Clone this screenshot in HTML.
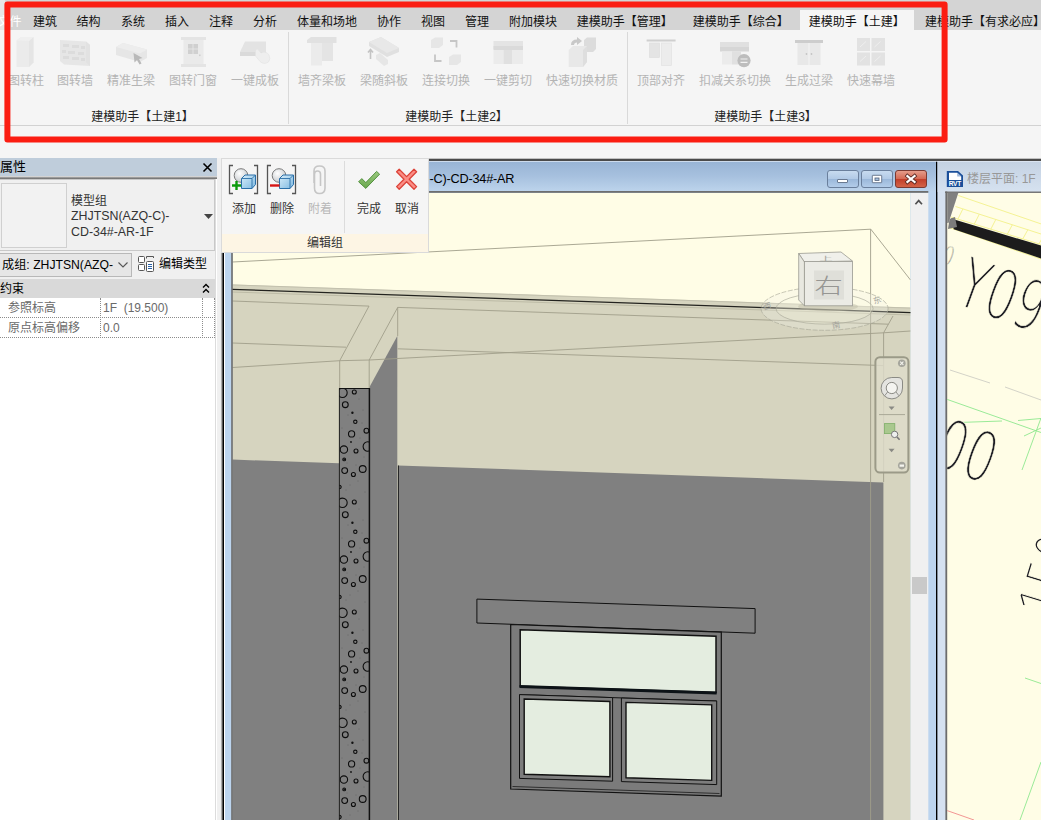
<!DOCTYPE html>
<html lang="zh-CN">
<head>
<meta charset="utf-8">
<title>Revit</title>
<style>
*{box-sizing:border-box;margin:0;padding:0}
html,body{width:1041px;height:820px;overflow:hidden;background:#f5f5f5}
body{position:relative;font-family:"Liberation Sans","Noto Sans CJK SC",sans-serif;font-size:12px;color:#1a1a1a}
.abs{position:absolute}
#tabbar{left:0;top:0;width:1041px;height:30px;background:#d4d4d4}
.tab{position:absolute;top:11.7px;height:20px;line-height:20px;font-size:12px;white-space:nowrap;transform:translateX(-50%);color:#111}
#acttab{left:800px;top:10px;width:114px;height:20px;background:#f5f5f5}
#ribbon{left:0;top:30px;width:1041px;height:128px;background:#f5f5f5}
.rb{position:absolute;top:73.5px;height:14px;line-height:14px;font-size:12px;white-space:nowrap;transform:translateX(-50%);color:#b4b4b4}
.pt{position:absolute;top:109.5px;height:14px;line-height:14px;font-size:12px;white-space:nowrap;transform:translateX(-50%);color:#222}
.vsep{position:absolute;top:32px;width:1px;height:92px;background:#d9d9d9}
#hline{left:0;top:125px;width:1041px;height:1px;background:#d2d2d2}
#redbox{left:5px;top:2px;width:942px;height:140px;border:5px solid #fb1d12;border-radius:9px}

#props{left:0;top:158px;width:217px;height:662px;background:#fff}
#phead{left:0;top:158px;width:217px;height:18px;background:#bfcddb;font-size:13px;line-height:18px;color:#000}
#phead2{left:0;top:176px;width:217px;height:3px;background:linear-gradient(#f0f0f0,#8a8a8a 60%,#6e6e6e)}
#ptype{left:0;top:179px;width:215px;height:72px;background:#f0f0f0;border:1px solid #c8c8c8;border-left:none}
#pprev{left:1px;top:183px;width:66px;height:65px;background:#f2f2f2;border:1px solid #d0d0d0}
.ptx{position:absolute;left:71px;font-size:12px;line-height:16px;color:#333;white-space:nowrap}
#pcombo{left:0;top:253px;width:132px;height:24px;background:#e6e6e6;border:1px solid #b8b8b8;border-left:none;font-size:12.2px;line-height:23px;padding-left:2px;color:#000;white-space:nowrap}
#pbar{left:0;top:251px;width:215px;height:28px;background:#f0f0f0}
#pedit{left:159px;top:256px;font-size:12px;line-height:16px;color:#000;white-space:nowrap}
#psec{left:0;top:279px;width:215px;height:19px;background:#d9d9d9;font-size:12px;line-height:20px;color:#000}
.prow{position:absolute;font-size:12px;line-height:19px;height:19px;color:#6a6a6a;white-space:nowrap}
.hd{position:absolute;left:0;width:215px;height:0;border-top:1px dotted #8c8c8c}
.vd{position:absolute;top:298px;height:40px;width:0;border-left:1px dotted #8c8c8c}
#pright{left:215px;top:179px;width:1px;height:641px;background:#dcdcdc}
#pgap{left:217px;top:158px;width:5px;height:662px;background:#f0f0f0}

#scene{left:220px;top:158px}

#eg{left:221px;top:157.5px;width:208px;height:95.5px;background:#f5f5f5;border:1px solid #dadada}
#egl{left:222px;top:234px;width:206px;height:18px;background:#fdf5e4;font-size:12px;line-height:19px;text-align:center;color:#333}
.el{position:absolute;top:200.6px;height:16px;line-height:16px;font-size:12px;white-space:nowrap;transform:translateX(-50%);color:#333}
#egsep{left:344px;top:161px;width:1px;height:72px;background:#dcdcdc}
#wtitle{left:429.5px;top:171px;font-size:12.7px;line-height:17px;color:#000;white-space:nowrap;letter-spacing:-0.2px}
#w2title{left:967px;top:171px;font-size:12px;line-height:17px;color:#989898;white-space:nowrap}
</style>
</head>
<body>
<div id="tabbar" class="abs"></div>
<div class="abs" style="left:0;top:0;width:5px;height:30px;background:#e6e6e6"></div>
<div id="acttab" class="abs"></div>
<div id="ribbon" class="abs"></div>
<div class="tab" style="left:-2.5px;color:#fff;transform:none">文件</div>
<div class="tab" style="left:45px">建筑</div>
<div class="tab" style="left:88.5px">结构</div>
<div class="tab" style="left:133px">系统</div>
<div class="tab" style="left:177px">插入</div>
<div class="tab" style="left:221px">注释</div>
<div class="tab" style="left:265px">分析</div>
<div class="tab" style="left:327px">体量和场地</div>
<div class="tab" style="left:389px">协作</div>
<div class="tab" style="left:433px">视图</div>
<div class="tab" style="left:477px">管理</div>
<div class="tab" style="left:533px">附加模块</div>
<div class="tab" style="left:624.8px">建模助手【管理】</div>
<div class="tab" style="left:740.8px">建模助手【综合】</div>
<div class="tab" style="left:856.8px">建模助手【土建】</div>
<div class="tab" style="left:925px;transform:none">建模助手【有求必应】</div>
<!--TABS-->
<div class="rb" style="left:26px">图转柱</div>
<div class="rb" style="left:75px">图转墙</div>
<div class="rb" style="left:131px">精准生梁</div>
<div class="rb" style="left:193px">图转门窗</div>
<div class="rb" style="left:255px">一键成板</div>
<div class="rb" style="left:322px">墙齐梁板</div>
<div class="rb" style="left:384px">梁随斜板</div>
<div class="rb" style="left:446px">连接切换</div>
<div class="rb" style="left:508px">一键剪切</div>
<div class="rb" style="left:582px">快速切换材质</div>
<div class="rb" style="left:661px">顶部对齐</div>
<div class="rb" style="left:735px">扣减关系切换</div>
<div class="rb" style="left:809px">生成过梁</div>
<div class="rb" style="left:871px">快速幕墙</div>
<div class="pt" style="left:142.5px">建模助手【土建1】</div>
<div class="pt" style="left:456.5px">建模助手【土建2】</div>
<div class="pt" style="left:765.5px">建模助手【土建3】</div>
<div class="vsep" style="left:288px"></div>
<div class="vsep" style="left:627px"></div>
<svg class="abs" style="left:0;top:30px" width="941" height="44" viewBox="0 30 941 44">
<g stroke="none">
<!-- column -->
<path d="M16.5 40.5 L21 37 H33.5 V62.5 L29 67 H16.5 Z" fill="#ebebeb"/>
<path d="M29 41 L33.5 37 V62.5 L29 67 Z" fill="#e5e5e5"/>
<path d="M16.5 40.5 L21 37 H33.5 L29 41 Z" fill="#efefef"/>
<!-- wall -->
<path d="M60 40 L86 41.5 L90 45 V66 L64 64.5 L60 61 Z" fill="#e6e6e6"/>
<path d="M86 41.5 L90 45 V66 L86 62.5 Z" fill="#e2e2e2"/>
<g fill="#dcdcdc"><rect x="63" y="44" width="6" height="3"/><rect x="72" y="45" width="7" height="3"/><rect x="81" y="46" width="4" height="3"/><rect x="62" y="50" width="4" height="3"/><rect x="68" y="51" width="7" height="3"/><rect x="78" y="52" width="6" height="3"/><rect x="63" y="56" width="6" height="3"/><rect x="72" y="57" width="7" height="3"/><rect x="81" y="58" width="4" height="3"/></g>
<!-- beam -->
<path d="M116 47 L123 43 L147 49.5 V58 L140 62 L116 55 Z" fill="#e6e6e6"/>
<path d="M116 47 L123 43 L147 49.5 L140 53.5 Z" fill="#ededed"/>
<path d="M133.5 53 L142.5 58 L139 59 L141.5 63.5 L139.5 64.5 L137 60 L134.5 62.5 Z" fill="#b9b9b9"/>
<!-- door -->
<rect x="181" y="37" width="25" height="3" fill="#e4e4e4"/>
<rect x="181" y="64" width="25" height="3" fill="#e4e4e4"/>
<rect x="183.5" y="40" width="20" height="24" fill="#eaeaea"/>
<g fill="#d0d0d0"><rect x="188" y="44" width="4.6" height="4.6"/><rect x="193.4" y="44" width="4.6" height="4.6"/><rect x="188" y="49.4" width="4.6" height="4.6"/><rect x="193.4" y="49.4" width="4.6" height="4.6"/><rect x="199" y="54.5" width="1.6" height="1.6"/></g>
<!-- slab -->
<path d="M245 41.500 H266 V56 H240 V52 Z" fill="#e3e3e3"/>
<path d="M240 52 H266 V56 H240 Z" fill="#dadada"/>
<path d="M255.500 50 Q257.500 48.500 259 50.500 L261 53 Q266 50.500 269 55 Q271 59 268.500 62 Q264 65 260 61.500 L255.500 56 Z" fill="#eeeeee" stroke="#e2e2e2" stroke-width="0.6"/>
<!-- wall-beam-slab -->
<path d="M307 40 L311 37 H336.5 V43 H307 Z" fill="#e1e1e1"/>
<rect x="311" y="43" width="11" height="22.5" fill="#ebebeb"/>
<rect x="322" y="43" width="11" height="18" fill="#e4e4e4"/>
<!-- beam follow slab -->
<path d="M369 42 L381 37 L399 48 V52 L387 57 L369 46 Z" fill="#e0e0e0"/>
<path d="M369 42 L381 37 L399 48 L387 53 Z" fill="#e8e8e8"/>
<path d="M376 55 L380 53 L388 60 V64 L384 66 L376 59 Z" fill="#e6e6e6"/>
<path d="M370.5 59 V50 M368 52.5 L370.5 49.5 L373 52.5" fill="none" stroke="#c4c4c4" stroke-width="1.6"/>
<!-- connect switch -->
<path d="M431 40 L435 37.5 H443 V45 L439 48 H431 Z" fill="#e6e6e6"/>
<path d="M449 57 L453 54.5 H461 V62 L457 65 H449 Z" fill="#e6e6e6"/>
<path d="M450 41 H456.5 V47.5 M441.5 61 H435 V54.5" fill="none" stroke="#c6c6c6" stroke-width="1.8"/>
<!-- one-key cut -->
<rect x="493.500" y="41" width="29.5" height="8" fill="#e4e4e4"/>
<rect x="493.500" y="46" width="29.5" height="4" fill="#dadada"/>
<rect x="493.500" y="50" width="10" height="14" fill="#ebebeb"/>
<rect x="503.500" y="50" width="9" height="14" fill="#e0e0e0"/>
<rect x="512.500" y="50" width="10.5" height="14" fill="#ebebeb"/>
<!-- material switch -->
<path d="M568.700 50 L573 46 H587 V62 L583 67 H568.700 Z" fill="#e8e8e8"/>
<path d="M583 50 L587 46 V62 L583 67 Z" fill="#dedede"/>
<path d="M584 40 L587 37.500 H596 V49 L593 52 H587 V46 H584 Z" fill="#dcdcdc"/>
<path d="M571 45 Q571 39.500 577 39.500 V37 L582 41 L577 45 V42.500 Q574 42.500 574 45 Z" fill="#c8c8c8"/>
<!-- top align -->
<rect x="646.600" y="39.500" width="29" height="2" fill="#cfcfcf"/>
<rect x="649.500" y="43" width="10" height="14.5" fill="#e4e4e4" stroke="#dcdcdc" stroke-width="0.6"/>
<rect x="661.500" y="43" width="10" height="22.500" fill="#ececec" stroke="#e0e0e0" stroke-width="0.6"/>
<!-- deduct switch -->
<rect x="720" y="42" width="29" height="7" fill="#e0e0e0"/>
<rect x="720" y="47" width="29" height="4.500" fill="#d6d6d6"/>
<rect x="722" y="51.500" width="10" height="13" fill="#ebebeb"/>
<rect x="732" y="51.500" width="9" height="13" fill="#e0e0e0"/>
<circle cx="744" cy="60.600" r="6.600" fill="#bdbdbd"/>
<path d="M740.500 59 H747.500 M740.500 62.300 H747.500" stroke="#f2f2f2" stroke-width="1.200" fill="none"/>
<!-- lintel -->
<rect x="795" y="40" width="28" height="3" fill="#cdcdcd"/>
<rect x="797.500" y="43" width="23" height="22" fill="#e8e8e8"/>
<path d="M809 43 V65" stroke="#f4f4f4" stroke-width="1" fill="none"/>
<circle cx="806.500" cy="54" r="0.900" fill="#c4c4c4"/><circle cx="811.500" cy="54" r="0.900" fill="#c4c4c4"/>
<!-- curtain wall -->
<g fill="#e2e2e2"><rect x="857" y="38" width="13" height="13"/><rect x="871.500" y="38" width="13.500" height="13"/><rect x="857" y="52.500" width="13" height="13"/><rect x="871.500" y="52.500" width="13.500" height="13"/></g>
<g stroke="#efefef" stroke-width="1" fill="none"><path d="M860 47 L866 41.500 M874.500 47 L880.500 41.500 M860 61.500 L866 56 M874.500 61.500 L880.500 56"/></g>
</g>
</svg>
<!--RIBBON-->
<div id="hline" class="abs"></div>
<div id="props" class="abs"></div>
<div id="phead" class="abs">属性</div>
<svg class="abs" style="left:202px;top:162px" width="11" height="11" viewBox="0 0 11 11"><path d="M1.5 1.5 L9.5 9.5 M9.5 1.5 L1.5 9.5" stroke="#000" stroke-width="1.6" fill="none"/></svg>
<div id="phead2" class="abs"></div>
<div id="ptype" class="abs"></div>
<div id="pprev" class="abs"></div>
<div class="ptx" style="top:192.5px">模型组</div>
<div class="ptx" style="top:208px;font-size:12.4px">ZHJTSN(AZQ-C)-</div>
<div class="ptx" style="top:223.5px;font-size:12.4px">CD-34#-AR-1F</div>
<svg class="abs" style="left:204px;top:214px" width="9" height="5" viewBox="0 0 9 5"><path d="M0 0 H9 L4.5 5 Z" fill="#444"/></svg>
<div id="pbar" class="abs"></div>
<div id="pcombo" class="abs">成组: ZHJTSN(AZQ-</div>
<svg class="abs" style="left:118px;top:262px" width="10" height="6" viewBox="0 0 10 6"><path d="M0.5 0.5 L5 5 L9.5 0.5" stroke="#555" stroke-width="1.1" fill="none"/></svg>
<svg class="abs" style="left:137px;top:255px" width="18" height="18" viewBox="0 0 18 18"><g fill="#fff" stroke="#555" stroke-width="1"><rect x="1.5" y="1.5" width="6" height="6" rx="1"/><rect x="1.5" y="9.5" width="6" height="6" rx="1"/><path d="M9.5 1.5 H14.5 M9.5 3.5 V1.5 M16.5 3 V1.5 H14" fill="none"/><rect x="9.5" y="6.5" width="7" height="10" rx="1"/></g><path d="M11 9.5 H15 M11 11.5 H15 M11 13.5 H15" stroke="#2a62a8" stroke-width="1"/></svg>
<div id="pedit" class="abs">编辑类型</div>
<div id="psec" class="abs">约束</div>
<svg class="abs" style="left:202px;top:283px" width="8" height="11" viewBox="0 0 8 11"><path d="M1 4.5 L4 1.5 L7 4.5 M1 9.5 L4 6.5 L7 9.5" stroke="#000" stroke-width="1.4" fill="none"/></svg>
<div class="prow" style="left:8px;top:299px">参照标高</div>
<div class="prow" style="left:103px;top:299px">1F&nbsp; (19.500)</div>
<div class="prow" style="left:8px;top:319px">原点标高偏移</div>
<div class="prow" style="left:103px;top:319px">0.0</div>
<div class="hd" style="top:317px"></div>
<div class="hd" style="top:337px"></div>
<div class="vd" style="left:100px"></div>
<div class="vd" style="left:202px"></div>
<div class="vd" style="left:214px"></div>
<div id="pright" class="abs"></div>
<div id="pgap" class="abs"></div>
<!--PROPS-->
<svg id="scene" class="abs" width="821" height="662" viewBox="220 158 821 662">
<defs>
<linearGradient id="tg" x1="0" y1="0" x2="0" y2="1"><stop offset="0" stop-color="#97b3d4"/><stop offset="0.5" stop-color="#a6c0de"/><stop offset="1" stop-color="#bdd4ec"/></linearGradient>
<linearGradient id="lg" x1="0" y1="0" x2="1" y2="0"><stop offset="0" stop-color="#d8d8d8"/><stop offset="1" stop-color="#4a4a4a"/></linearGradient>
<linearGradient id="tg2" x1="0" y1="0" x2="0" y2="1"><stop offset="0" stop-color="#c3d1e2"/><stop offset="1" stop-color="#d6e2f0"/></linearGradient>
<pattern id="conc" x="339" y="385" width="31" height="110" patternUnits="userSpaceOnUse">
<rect width="31" height="110" fill="#808080"/>
<g fill="none" stroke="#0c0c0c" stroke-width="1.1"><circle cx="3.5" cy="7.8" r="4.7"/><circle cx="15.3" cy="7" r="2"/><circle cx="6.3" cy="19.7" r="2.9"/><circle cx="16.3" cy="36.8" r="1.7"/><circle cx="27.4" cy="45.7" r="2.4"/><circle cx="12.6" cy="48.9" r="3.1"/><circle cx="28.8" cy="61.5" r="4.7"/><circle cx="4.9" cy="64.6" r="3.7"/><circle cx="17" cy="66" r="2"/><circle cx="5.2" cy="74.4" r="1.4"/><circle cx="23.7" cy="84" r="3.4"/><circle cx="5.7" cy="85.6" r="2.9"/><circle cx="14.4" cy="89.5" r="2"/><circle cx="0.6" cy="102" r="1.6"/></g>
<g fill="#111"><circle cx="13.4" cy="27.8" r="1.2"/><circle cx="12" cy="57" r="0.9"/><circle cx="5.2" cy="74.4" r="0.8"/></g>
<g fill="#4a4a4a"><circle cx="20" cy="14" r="0.45"/><circle cx="9" cy="30" r="0.45"/><circle cx="24" cy="25" r="0.45"/><circle cx="21" cy="53" r="0.45"/><circle cx="8" cy="78" r="0.45"/><circle cx="25" cy="72" r="0.45"/><circle cx="19" cy="96" r="0.45"/><circle cx="7" cy="105" r="0.45"/><circle cx="26" cy="107" r="0.45"/><circle cx="23" cy="38" r="0.45"/><circle cx="11" cy="100" r="0.45"/><circle cx="17" cy="80" r="0.45"/><circle cx="3" cy="43" r="0.45"/></g>
</pattern>
<filter id="thin" x="940" y="190" width="110" height="640" filterUnits="userSpaceOnUse"><feMorphology operator="erode" radius="0.55"/></filter>
<clipPath id="vc2"><rect x="947.2" y="193" width="94" height="627"/></clipPath>
<clipPath id="vc"><rect x="232" y="193" width="678.7" height="627"/></clipPath>
</defs>
<!-- window frames -->
<rect x="222" y="158" width="819" height="662" fill="#f5f5f5"/>
<rect x="222" y="160" width="716" height="660" fill="#bcd4ee"/>
<rect x="222" y="160" width="716" height="31.5" fill="url(#tg)"/>
<rect x="220.8" y="252" width="2.2" height="568" fill="url(#lg)"/><rect x="222.8" y="160" width="1.2" height="660" fill="#000"/>
<rect x="224" y="192" width="1" height="628" fill="#fff"/>
<rect x="231.3" y="191" width="697" height="1.8" fill="#6e6e6e"/>

<rect x="936" y="160" width="1.6" height="660" fill="#000"/>
<!-- window 2 -->
<rect x="937.6" y="160" width="104" height="660" fill="#d5e1f0"/>
<rect x="937.6" y="160" width="104" height="32" fill="url(#tg2)"/>
<rect x="945" y="191.5" width="96" height="1.5" fill="#777"/>
<rect x="222" y="158.7" width="819" height="2.3" fill="#4a4a4a"/>
<rect x="224" y="161" width="817" height="0.7" fill="#e4edf7"/>

<rect x="946" y="193" width="95" height="627" fill="#fffde6"/>
<rect x="945.4" y="191.5" width="1.8" height="629" fill="#6c6c6c"/>
<!-- scrollbar -->
<rect x="910.7" y="193" width="17.6" height="627" fill="#f0f0f0"/>
<rect x="912" y="577" width="15" height="17" fill="#c9c9c9"/>
<path d="M915.4 204.2 L918.7 200.6 L922 204.2" fill="none" stroke="#505050" stroke-width="1.7"/>
<!-- 3D view -->
<g clip-path="url(#vc)">
<rect x="232.5" y="193" width="678" height="627" fill="#fffde6"/>
<!-- slab/beige -->
<polygon points="232.5,284.4 910.5,307.6 910.5,820 232.5,820" fill="#d6d4bf"/>
<path d="M232.5 284.9 L910.5 308.1" stroke="#c2c0ad" stroke-width="1" fill="none"/>
<!-- grey wall -->
<polygon points="232.5,459.6 339,463.2 339,820 232.5,820" fill="#808080"/>
<polygon points="398,465.4 883.4,482.5 883.4,820 398,820" fill="#808080"/>
<polygon points="369.5,387 397.3,336 397.3,820 369.5,820" fill="#808080"/>
<rect x="339.3" y="388.3" width="30.2" height="432" fill="url(#conc)"/>
<g fill="none" stroke="#111" stroke-width="1">
<path d="M339.4 388.3 V820" stroke-width="0.9"/>
<path d="M369.4 388.3 V820" stroke-width="1.5"/>
<path d="M339 388.5 H370" stroke-width="1"/>
<path d="M398.4 465.5 V820" stroke-width="0.9"/>
</g>
<!-- dark horizon line -->
<path d="M232 289.4 L910.7 312.6" stroke="#23231f" stroke-width="1.3" fill="none"/>
<path d="M232.5 292 L910.5 315" stroke="#bdbba6" stroke-width="1" fill="none"/>
<!-- wireframe -->
<g fill="none" stroke="#a09e8a" stroke-width="0.9">
<path d="M232.5 262 L870.8 229.2 L910.5 280"/>
<path d="M870.6 229.2 V820"/>
<path d="M232.5 301 L369 306.1 L339.7 360.7 V388"/>
<path d="M397.7 307.4 L888.3 324.2"/>
<path d="M397.7 307.4 L369.2 360 V388"/>
<path d="M397.7 307.4 V336"/>
<path d="M232.5 343 L346 347.2"/>
<path d="M397.7 348.8 L883.5 365.6"/>
<path d="M232.5 367.5 L339.7 360.7 L369.2 360 L883.5 332.8 L910.5 331"/>
<path d="M883.6 332.8 V482"/>
<path d="M883.6 332.8 L893 316"/>
</g>
<!-- lintel -->
<polygon points="476.9,599.1 755.1,608.6 755.1,633.2 476.9,623" fill="#808080" stroke="#111" stroke-width="1"/>
<!-- window -->
<polygon points="510.7,624.5 721.3,632.2 721.3,796.1 510.7,789" fill="#7b7b7b" stroke="#111" stroke-width="1.2"/>
<path d="M512.5 786.5 L719.5 793.5" stroke="#1a1a1a" stroke-width="0.8" fill="none"/>
<polygon points="520.2,629.8 716,636.2 716,692.6 520.2,686.2" fill="#e4ede0" stroke="#111" stroke-width="1.5"/>
<path d="M519.5 686.6 L716.7 693" stroke="#0c1216" stroke-width="3" fill="none"/>
<path d="M519.5 694.6 L716.7 701" stroke="#111" stroke-width="1" fill="none"/>
<polygon points="519.5,694.6 612.6,697.6 612.6,781.2 519.5,778.4" fill="#7d7d7d" stroke="#111" stroke-width="1"/>
<polygon points="621.4,698 716.7,701 716.7,784.6 621.4,781.6" fill="#7d7d7d" stroke="#111" stroke-width="1"/>
<polygon points="524.2,699 609.9,701.5 609.9,776.8 524.2,774.3" fill="#e4ede0" stroke="#111" stroke-width="1.4"/>
<polygon points="626,702.4 711.7,704.9 711.7,780.4 626,777.7" fill="#e4ede0" stroke="#111" stroke-width="1.4"/>
<!-- viewcube -->
<g>
<ellipse cx="824.6" cy="308.7" rx="63.5" ry="21.6" fill="#f2f1e6" fill-opacity="0.28" stroke="#a9a898" stroke-width="0.8" stroke-dasharray="5 1.5" stroke-opacity="0.8"/>
<ellipse cx="824.6" cy="308.7" rx="48.5" ry="15.4" fill="#fffde6" fill-opacity="0.18" stroke="#a9a898" stroke-width="0.8" stroke-opacity="0.8"/>
<ellipse cx="828" cy="306.5" rx="30" ry="5" fill="#b9b7a2" fill-opacity="0.4"/>
<polygon points="798.7,253.5 841,252 852.5,261 804.4,262" fill="#f0f0ea" stroke="#9a9a92" stroke-width="0.8"/>
<polygon points="798.7,253.5 804.4,262 804.4,305.8 798.7,300" fill="#e8e8e0" stroke="#9a9a92" stroke-width="0.8"/>
<rect x="804.4" y="261.5" width="48.1" height="44.3" fill="#ebebe5" stroke="#9a9a92" stroke-width="0.8"/>
<rect x="814" y="270.5" width="30" height="29" fill="#dfdfd9"/>
<text transform="translate(828.6 292.5) scale(1.36 1)" font-family="'Liberation Sans','Noto Sans CJK SC',sans-serif" font-size="21" font-weight="300" fill="#969693" text-anchor="middle">右</text>
<text transform="translate(826 259.6) scale(1.7 0.55)" font-family="'Liberation Sans','Noto Sans CJK SC',sans-serif" font-size="8" fill="#a6a69e" text-anchor="middle">上</text>
<text x="767" y="309" font-family="'Liberation Sans','Noto Sans CJK SC',sans-serif" font-size="8" fill="#a3a39b" text-anchor="middle" transform="rotate(-15 767 306)">西</text>
<text x="877" y="303" font-family="'Liberation Sans','Noto Sans CJK SC',sans-serif" font-size="8" fill="#a3a39b" text-anchor="middle" transform="rotate(-20 877 300)">东</text>
<text x="836" y="328" font-family="'Liberation Sans','Noto Sans CJK SC',sans-serif" font-size="8" fill="#a3a39b" text-anchor="middle" transform="rotate(-12 836 325)">南</text>
</g>
<!-- navbar -->
<g>
<rect x="875.4" y="357.2" width="33" height="115.4" rx="4.5" fill="#dedccb" fill-opacity="0.8" stroke="#9b9a88" stroke-width="2"/>
<circle cx="901.8" cy="363.2" r="3.8" fill="#a5a59c"/>
<path d="M900.2 361.6 L903.4 364.8 M903.4 361.6 L900.2 364.8" stroke="#f4f4ee" stroke-width="1.1"/>
<path d="M891.8 377.5 H898 Q902.5 377.5 902.5 382 V388 A10.7 10.7 0 1 1 891.8 377.5 Z" fill="#e4e4e0" stroke="#8a8a84" stroke-width="1"/>
<circle cx="891.8" cy="388" r="5.6" fill="#f4f4f0" stroke="#8a8a84" stroke-width="1"/>
<path d="M887.6 392 L884.6 395.8 M896 392 L899 395.8" stroke="#8a8a84" stroke-width="0.9"/>
<path d="M888.6 406.6 H894.6 L891.6 410 Z" fill="#8a8a84"/>
<path d="M879 414.6 H905" stroke="#a9a897" stroke-width="1"/>
<rect x="884.4" y="423.6" width="10.4" height="10" fill="#a9c88e" stroke="#7fae68" stroke-width="0.8"/>
<circle cx="894.6" cy="434.4" r="3.2" fill="#eef0ee" stroke="#777" stroke-width="1"/>
<path d="M897 437 L899.6 439.8" stroke="#777" stroke-width="1.6"/>
<path d="M888.6 448.8 H894.6 L891.6 452.2 Z" fill="#8a8a84"/>
<circle cx="901.8" cy="465.6" r="3.8" fill="#a5a59c"/>
<path d="M899.6 464.6 H904 V466.8 H899.6 Z" fill="#f4f4ee"/>
</g>
</g>
<!-- window buttons -->
<defs>
<linearGradient id="bb" x1="0" y1="0" x2="0" y2="1"><stop offset="0" stop-color="#c9dcf0"/><stop offset="0.48" stop-color="#b2cae6"/><stop offset="0.52" stop-color="#9bb8da"/><stop offset="1" stop-color="#b4cdea"/></linearGradient>
<linearGradient id="br" x1="0" y1="0" x2="0" y2="1"><stop offset="0" stop-color="#e6a08e"/><stop offset="0.48" stop-color="#d46a55"/><stop offset="0.52" stop-color="#c23f2a"/><stop offset="1" stop-color="#d4664a"/></linearGradient>
</defs>
<g>
<rect x="827.5" y="170.5" width="31" height="17" rx="2.5" fill="url(#bb)" stroke="#6a7f9c" stroke-width="1"/>
<rect x="861.5" y="170.5" width="31" height="17" rx="2.5" fill="url(#bb)" stroke="#6a7f9c" stroke-width="1"/>
<rect x="895.5" y="170.5" width="31" height="17" rx="2.5" fill="url(#br)" stroke="#7a3a32" stroke-width="1"/>
<rect x="837.5" y="179.5" width="10" height="3" rx="0.5" fill="#fff" stroke="#4f5f78" stroke-width="0.8"/>
<rect x="872.3" y="175.3" width="9.4" height="7.4" rx="0.5" fill="#fff" stroke="#4f5f78" stroke-width="0.8"/>
<rect x="875" y="178" width="4" height="2.4" fill="#a6c0de" stroke="#4f5f78" stroke-width="0.8"/>
<path d="M907.4 176 L914.6 182 M914.6 176 L907.4 182" stroke="#5a2a24" stroke-width="3.8" stroke-linecap="square"/>
<path d="M907.4 176 L914.6 182 M914.6 176 L907.4 182" stroke="#fff" stroke-width="2.2" stroke-linecap="square"/>
</g>
<!-- RVT icon -->
<g>
<path d="M946.8 171 H958 L963 175.5 V187 H946.8 Z" fill="#1b4f9a"/>
<path d="M949 172.8 H957.2 L961.2 176.6 V180 H949 Z" fill="#fff"/>
<path d="M957.2 172.8 V176.6 H961.2 Z" fill="#9fb8dc"/>
<text x="954.9" y="186.2" font-family="'Liberation Sans',sans-serif" font-size="6.6" font-weight="bold" fill="#fff" text-anchor="middle" letter-spacing="-0.2">RVT</text>
</g>
<!-- second window content -->
<g clip-path="url(#vc2)">
<polygon points="946,193 958.3,193 948.5,223 946,223" fill="#808080"/>
<g stroke="#f3f08a" stroke-width="0.9" fill="none">
<path d="M958.3 195.5 L1041 223.9"/><path d="M955.5 206.5 L1041 234"/><path d="M951 217 L1041 244.5"/><path d="M949 227.5 L1041 259"/>
<path d="M962.9 208.9 L957.9 219.1 M979.3 214.2 L974.3 224.1 M995.8 219.5 L990.8 229.2 M1012.3 224.8 L1007.3 234.2 M1027.8 229.8 L1022.8 238.9 M1044.0 235.0 L1039.0 243.9"/>
</g>
<polygon points="951,218.4 1041,245.6 1041,258.4 953.7,229.3" fill="#1c1c1c"/>
<polygon points="949.5,219 955,217 957,227 948,229" fill="#7c7c7c"/>
<g stroke="#8fe88f" stroke-width="0.9" fill="none">
<path d="M946 399 L1041 432.5"/><path d="M958 422.5 L1002 421"/><path d="M1018 420.5 L1041 418.5"/><path d="M1041 418 L1022 470"/><path d="M1024 436 L1041 428"/>
<path d="M1025 678 L1041 683.5"/><path d="M1041 762 L1020 820"/>
</g>
<path d="M946 810.2 L974 820" stroke="#f08a8a" stroke-width="0.9" fill="none"/>
<g stroke="#c8c8c0" stroke-width="0.8" fill="none"><path d="M950 370 L990 383"/><path d="M1005 387 L1041 400"/></g>
<g font-family="'DejaVu Sans','Liberation Sans',sans-serif" font-weight="200" fill="#1e1e24" font-size="68" stroke="#fffde6" stroke-width="0.6" paint-order="fill stroke" vector-effect="non-scaling-stroke">
<text vector-effect="non-scaling-stroke" transform="translate(939.5 262.5) rotate(20) scale(0.7 1)" font-size="26">0</text>
<text vector-effect="non-scaling-stroke" transform="translate(953 302.5) rotate(20) scale(0.69 1)">Y09</text>
<text vector-effect="non-scaling-stroke" transform="translate(901.5 453) rotate(20) scale(0.7 1)">000</text>
<text vector-effect="non-scaling-stroke" stroke-width="1.1" transform="translate(1063.5 622.5) rotate(-73) scale(0.63 1)">150</text>
</g>
</g>
<rect x="231.2" y="192" width="1.6" height="628" fill="#6c6c6c"/>
<!--SVGEXTRA-->
</svg>
<!--WINDOWS-->
<div id="eg" class="abs"></div>
<div id="egl" class="abs">编辑组</div>
<div id="egsep" class="abs"></div>
<div class="el" style="left:244px">添加</div>
<div class="el" style="left:282px">删除</div>
<div class="el" style="left:320px;color:#b8b8b8">附着</div>
<div class="el" style="left:369px">完成</div>
<div class="el" style="left:407px">取消</div>
<svg class="abs" style="left:226px;top:162px" width="200" height="36" viewBox="226 162 200 36">
<defs>
<linearGradient id="cb" x1="0" y1="0" x2="1" y2="1"><stop offset="0" stop-color="#d8eefa"/><stop offset="1" stop-color="#7db8e0"/></linearGradient>
<radialGradient id="sp" cx="0.4" cy="0.35" r="0.7"><stop offset="0" stop-color="#ffffff"/><stop offset="1" stop-color="#c4c8cc"/></radialGradient>
<linearGradient id="gk" x1="0" y1="0" x2="0" y2="1"><stop offset="0" stop-color="#9ac97e"/><stop offset="1" stop-color="#6aa84e"/></linearGradient>
<linearGradient id="rx" x1="0" y1="0" x2="0" y2="1"><stop offset="0" stop-color="#f98a80"/><stop offset="1" stop-color="#e8403a"/></linearGradient>
</defs>
<g id="grpico">
<path d="M233 165.5 H229.5 V193.5 H233 M254 165.5 H257.5 V193.5 H254" fill="none" stroke="#555" stroke-width="1.3"/>
<circle cx="241" cy="175.5" r="6.8" fill="url(#sp)" stroke="#7a7a7a" stroke-width="1"/>
<path d="M241.5 178.5 L245 175 H255.5 V184.5 L252 188.5 H241.5 Z" fill="url(#cb)" stroke="#2a6fa8" stroke-width="1"/>
<path d="M241.5 178.5 H252 V188.5 M252 178.5 L255.5 175" fill="none" stroke="#2a6fa8" stroke-width="0.9"/>
</g>
<path d="M232 185.5 H241 M236.5 181 V190" stroke="#0c9a0c" stroke-width="2.4" fill="none"/>
<use href="#grpico" x="38" y="0"/>
<path d="M270 185.5 H279.5" stroke="#d61414" stroke-width="2.4" fill="none"/>
<path d="M314 183 V171 Q314 166 319.5 166 Q325 166 325 171 V188 Q325 193.5 319.5 193.5 Q314.5 193.5 314.5 188 V174 Q314.5 171 317.5 171 Q320.5 171 320.5 174 V186" fill="none" stroke="#c6c6c6" stroke-width="1.6"/>
<path d="M358.6 181.8 L361.8 178.6 L365.8 182.6 L376.6 171.4 L379.6 174.2 L365.8 188.4 Z" fill="url(#gk)" stroke="#4a8a36" stroke-width="0.9" stroke-linejoin="round"/>
<path d="M396.6 171.8 L399.2 169.2 L406.6 176.6 L414 169.2 L416.600 171.8 L409.2 179.2 L416.600 186.6 L414 189.2 L406.6 181.8 L399.2 189.2 L396.6 186.6 L404 179.2 Z" fill="#fb8d85" stroke="#dc4238" stroke-width="1.3" stroke-linejoin="round"/>
</svg>
<div id="wtitle" class="abs">-C)-CD-34#-AR</div>
<div id="w2title" class="abs">楼层平面: 1F</div>
<!--EDITGROUP-->
<svg class="abs" style="left:0;top:0" width="960" height="150" viewBox="0 0 960 150"><rect x="7.4" y="4.5" width="937.2" height="135" fill="none" stroke="#fb1d12" stroke-width="6" stroke-linejoin="round"/></svg>
</body>
</html>
